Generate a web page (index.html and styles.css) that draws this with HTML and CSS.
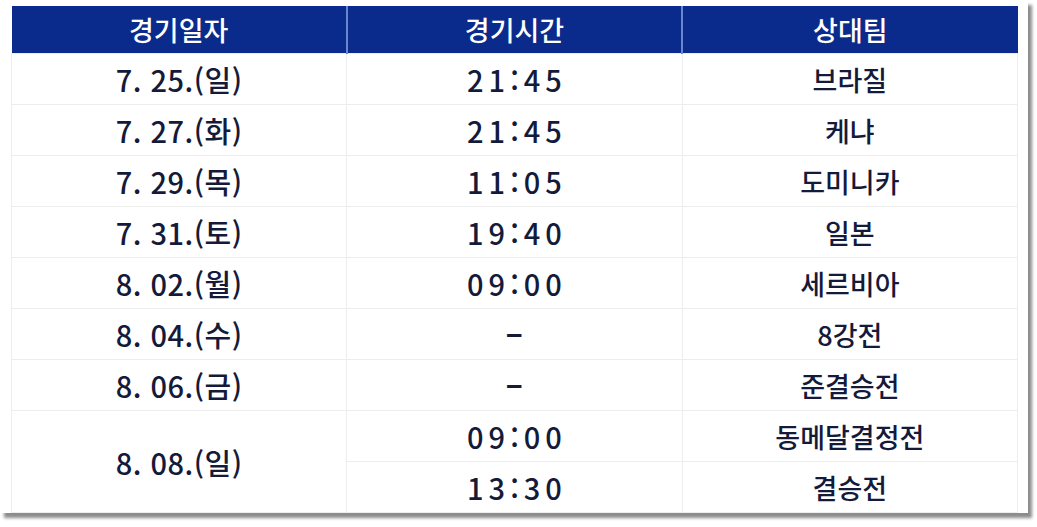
FILE: index.html
```html
<!DOCTYPE html>
<html lang="ko">
<head>
<meta charset="utf-8">
<link rel="stylesheet" href="styles.css">
</head>
<body>
<div class="frame">
  <table class="schedule">
    <thead>
      <tr><th>경기일자</th><th>경기시간</th><th>상대팀</th></tr>
    </thead>
    <tbody>
      <tr><td class="num">7. 25.(일)</td><td class="num time">21:45</td><td>브라질</td></tr>
      <tr><td class="num">7. 27.(화)</td><td class="num time">21:45</td><td>케냐</td></tr>
      <tr><td class="num">7. 29.(목)</td><td class="num time">11:05</td><td>도미니카</td></tr>
      <tr><td class="num">7. 31.(토)</td><td class="num time">19:40</td><td>일본</td></tr>
      <tr><td class="num">8. 02.(월)</td><td class="num time">09:00</td><td>세르비아</td></tr>
      <tr><td class="num">8. 04.(수)</td><td class="num"><span class="dash">-</span></td><td>8강전</td></tr>
      <tr><td class="num">8. 06.(금)</td><td class="num"><span class="dash">-</span></td><td>준결승전</td></tr>
      <tr><td class="num" rowspan="2">8. 08.(일)</td><td class="num time">09:00</td><td>동메달결정전</td></tr>
      <tr><td class="num time">13:30</td><td>결승전</td></tr>
    </tbody>
  </table>
</div>
</body>
</html>
```
FILE: styles.css
```css
html, body {
  margin: 0;
  padding: 0;
  background: #ffffff;
}
body {
  width: 1037px;
  height: 527px;
  overflow: hidden;
}
.frame {
  width: 1017px;
  height: 507px;
  padding: 6px 0 0 11px;
  background: #ffffff;
  box-shadow: 4px 5px 3px rgba(0, 0, 0, 0.45);
}
.schedule {
  width: 1007px;
  border-collapse: collapse;
  table-layout: fixed;
  font-family: "Noto Sans CJK KR", "Noto Sans", sans-serif;
  color: #141a3a;
}
.schedule th {
  height: 47px;
  padding: 0;
  background: #0b2b8c;
  color: #ffffff;
  font-size: 27px;
  font-weight: 500;
  text-align: center;
  border-left: 2px solid #6a86d0;
}
.schedule th:first-child {
  border-left: none;
}
.schedule td {
  height: 50px;
  padding: 0;
  text-align: center;
  font-size: 27px;
  font-weight: 500;
  border: 1px solid #ededed;
}
.schedule td.num {
  font-size: 29px;
  font-weight: 500;
  letter-spacing: 0.5px;
}
.schedule td.time {
  letter-spacing: 5px;
  padding-left: 5px;
}
.dash {
  display: inline-block;
  font-weight: 700;
  transform: scaleX(1.8);
}
```
